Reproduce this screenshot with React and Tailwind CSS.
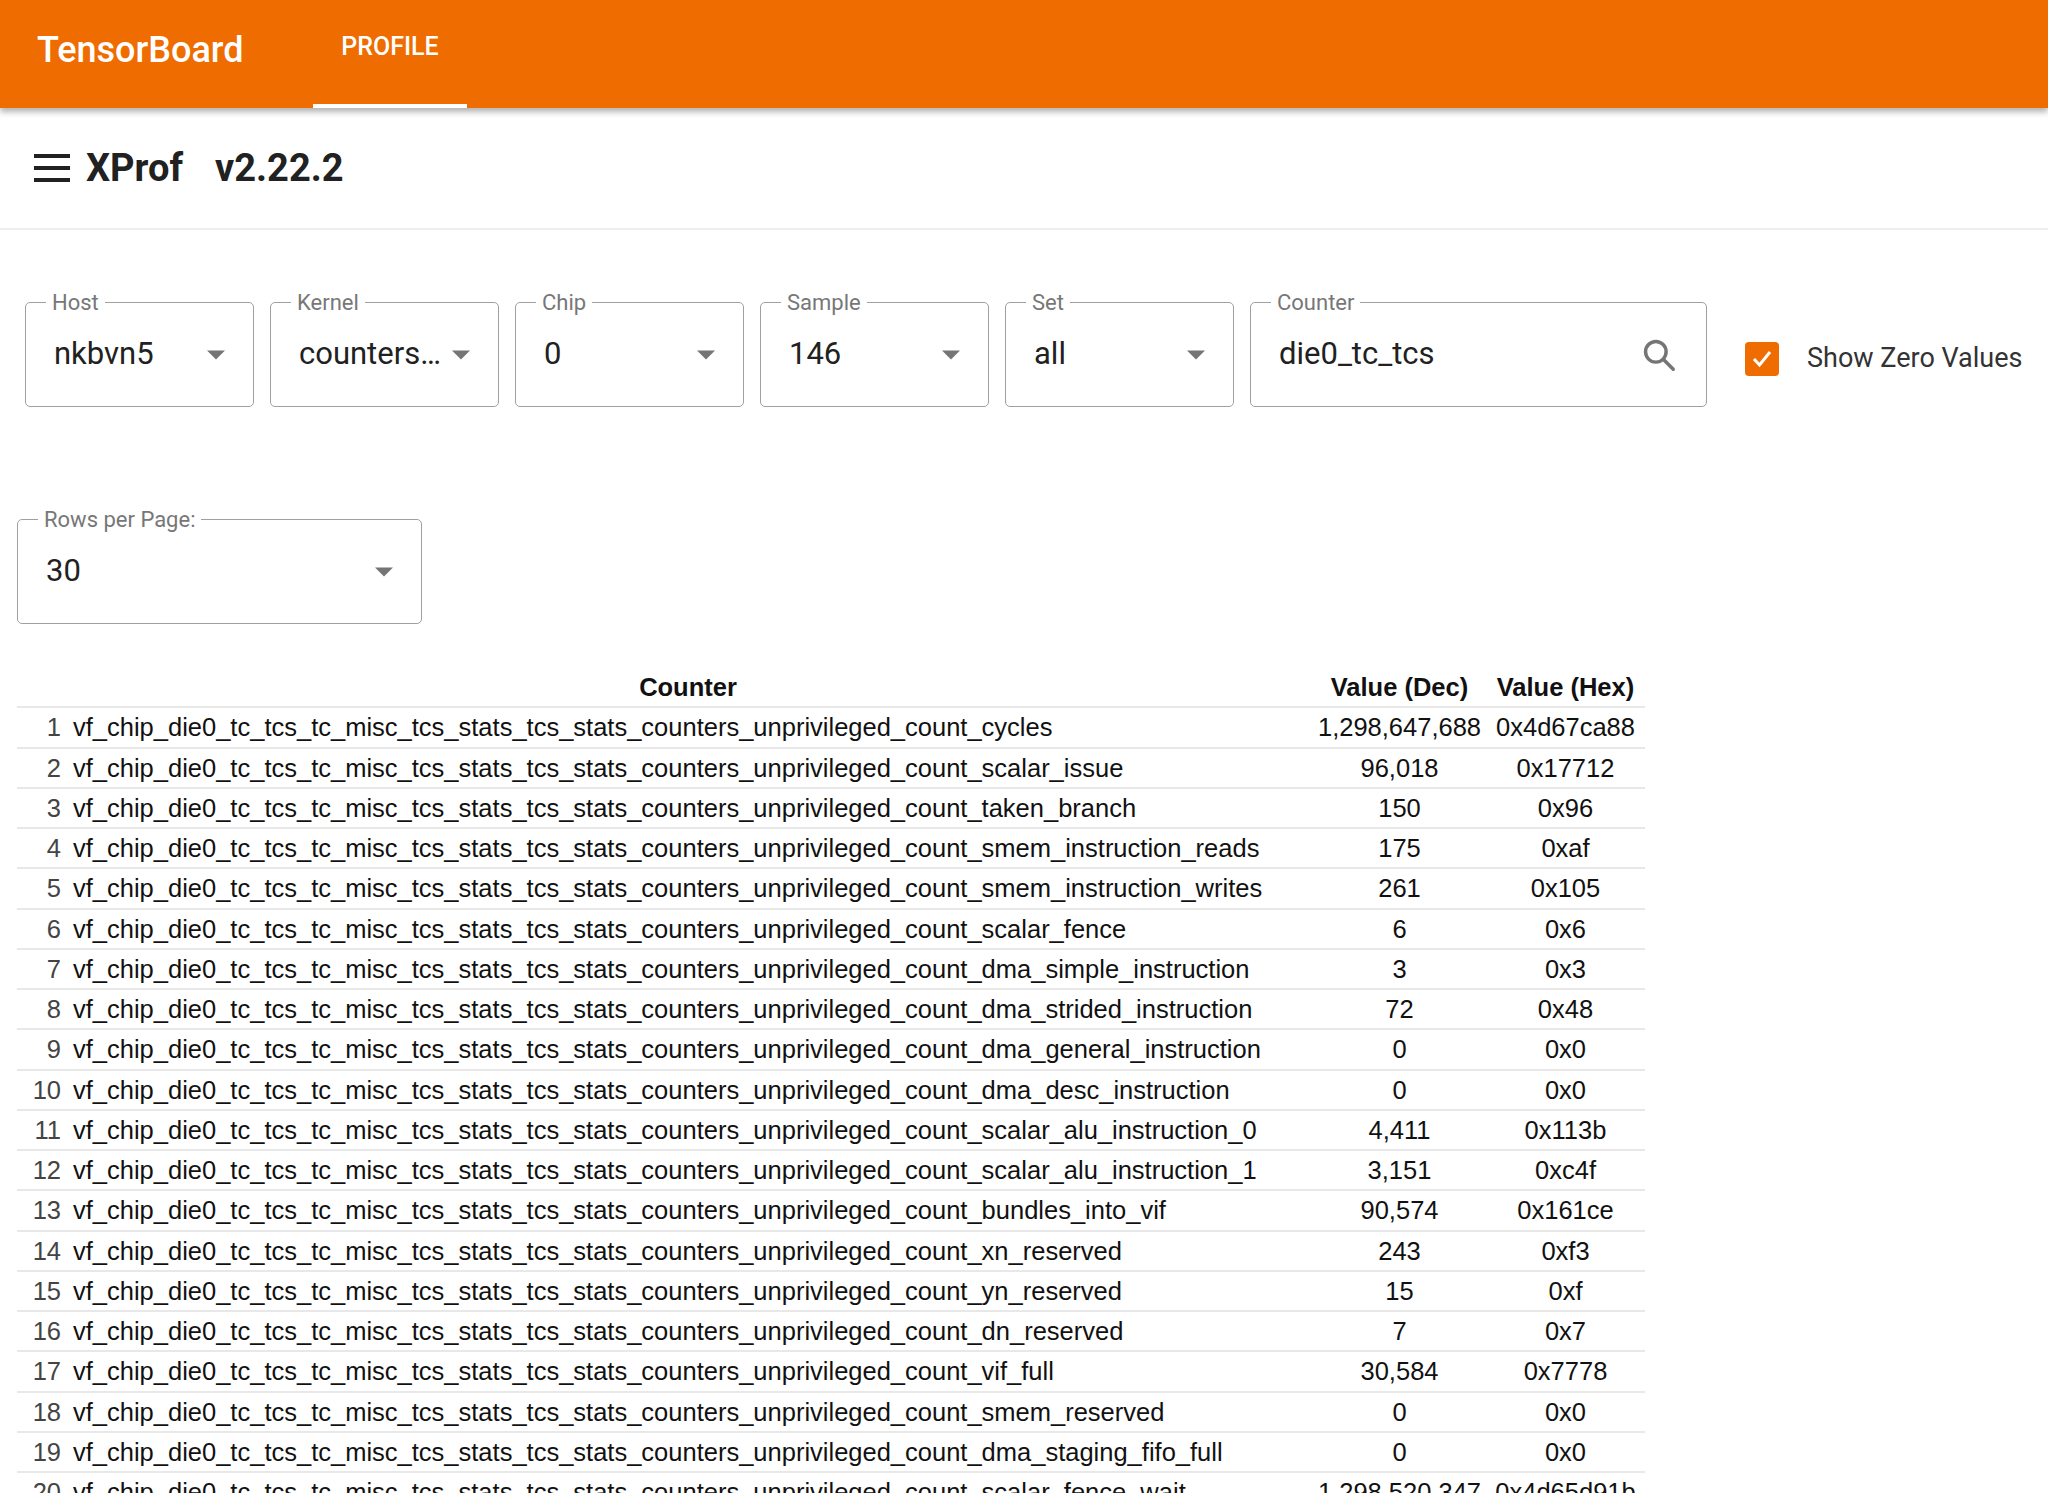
const rows = [
  ["cycles", "1,298,647,688", "0x4d67ca88"],
  ["scalar_issue", "96,018", "0x17712"],
  ["taken_branch", "150", "0x96"],
  ["smem_instruction_reads", "175", "0xaf"],
  ["smem_instruction_writes", "261", "0x105"],
  ["scalar_fence", "6", "0x6"],
  ["dma_simple_instruction", "3", "0x3"],
  ["dma_strided_instruction", "72", "0x48"],
  ["dma_general_instruction", "0", "0x0"],
  ["dma_desc_instruction", "0", "0x0"],
  ["scalar_alu_instruction_0", "4,411", "0x113b"],
  ["scalar_alu_instruction_1", "3,151", "0xc4f"],
  ["bundles_into_vif", "90,574", "0x161ce"],
  ["xn_reserved", "243", "0xf3"],
  ["yn_reserved", "15", "0xf"],
  ["dn_reserved", "7", "0x7"],
  ["vif_full", "30,584", "0x7778"],
  ["smem_reserved", "0", "0x0"],
  ["dma_staging_fifo_full", "0", "0x0"],
  ["scalar_fence_wait", "1,298,520,347", "0x4d65d91b"],
];

const PREFIX = "vf_chip_die0_tc_tcs_tc_misc_tcs_stats_tcs_stats_counters_unprivileged_count_";

function Caret() {
  return (
    <svg width="18" height="10" viewBox="0 0 10 5" className="shrink-0">
      <path d="M0 0 L5 5 L10 0 Z" fill="#757575" />
    </svg>
  );
}

function Field({ label, value, width, search }) {
  return (
    <fieldset className={`${width} h-[121px] border-[1.5px] border-[#a0a0a0] rounded-[5px] px-[28px] pb-[10px] -mt-[14px]`}>
      <legend className="px-[6px] -ml-[8px] text-[22px] text-[#777]">{label}</legend>
      <div className="flex items-center justify-between h-full pb-[6px]">
        <span className="text-[31px] text-[#212121] truncate">{value}</span>
        {search ? (
          <svg width="38" height="38" viewBox="0 0 24 24" fill="none" stroke="#757575" strokeWidth="2.2">
            <circle cx="10" cy="10" r="6.5" />
            <path d="M15 15 L21 21" strokeLinecap="round" />
          </svg>
        ) : (
          <Caret />
        )}
      </div>
    </fieldset>
  );
}

export default function App() {
  return (
    <div className="min-h-screen bg-white" style={{ fontFamily: "Roboto, 'Liberation Sans', sans-serif" }}>
      <header className="h-[108px] bg-[#ef6c00] flex items-stretch text-white shadow-[0_4px_6px_rgba(0,0,0,0.3)] relative">
        <div className="pl-[37px] w-[313px] flex items-center text-[36px] font-medium pb-[8px]">TensorBoard</div>
        <div className="w-[154px] flex flex-col items-center">
          <div className="flex-1 flex items-center text-[25px] font-medium pb-[10px]">PROFILE</div>
          <div className="h-[4px] w-full bg-white" />
        </div>
      </header>

      <div className="h-[122px] border-b-2 border-[#eeeeee] flex items-center pl-[34px] gap-[16px]">
        <svg width="36" height="28" viewBox="0 0 18 14">
          <path d="M0 1 H18 M0 7 H18 M0 13 H18" stroke="#212121" strokeWidth="2" />
        </svg>
        <span className="text-[38px] font-bold text-[#212121]">XProf</span>
        <span className="text-[38px] font-bold text-[#212121] ml-[16px]">v2.22.2</span>
      </div>

      <div className="flex items-center gap-[16px] pl-[25px] pt-[70px]">
        <Field label="Host" value="nkbvn5" width="w-[229px]" />
        <Field label="Kernel" value="counters…" width="w-[229px]" />
        <Field label="Chip" value="0" width="w-[229px]" />
        <Field label="Sample" value="146" width="w-[229px]" />
        <Field label="Set" value="all" width="w-[229px]" />
        <Field label="Counter" value="die0_tc_tcs" width="w-[457px]" search />
        <div className="flex items-center gap-[28px] ml-[22px] mt-[10px]">
          <div className="w-[34px] h-[34px] rounded-[4px] bg-[#ef6c00] flex items-center justify-center">
            <svg width="24" height="24" viewBox="0 0 24 24" fill="none" stroke="white" strokeWidth="3">
              <path d="M4 12 L9.5 18 L20 5" />
            </svg>
          </div>
          <span className="text-[27px] text-[#333]">Show Zero Values</span>
        </div>
      </div>

      <div className="pl-[17px] pt-[110px]">
        <Field label="Rows per Page:" value="30" width="w-[405px]" />
      </div>

      <table className="ml-[17px] mt-[44px] w-[1628px] border-collapse text-[25.5px] text-[#111]" style={{ fontFamily: "'Liberation Sans', Arial, sans-serif" }}>
        <thead>
          <tr className="h-[36px]">
            <th className="w-[46px]" />
            <th className="font-bold text-center">Counter</th>
            <th className="w-[173px] font-bold text-center">Value (Dec)</th>
            <th className="w-[159px] font-bold text-center">Value (Hex)</th>
          </tr>
        </thead>
        <tbody>
          {rows.map((r, i) => (
            <tr key={i} className="h-[39px] border-t-2 border-[#e8e8e8]">
              <td className="text-right pr-[2px] text-[#444]">{i + 1}</td>
              <td className="pl-[10px] whitespace-nowrap">{PREFIX + r[0]}</td>
              <td className="text-center whitespace-nowrap">{r[1]}</td>
              <td className="text-center whitespace-nowrap">{r[2]}</td>
            </tr>
          ))}
        </tbody>
      </table>
    </div>
  );
}
